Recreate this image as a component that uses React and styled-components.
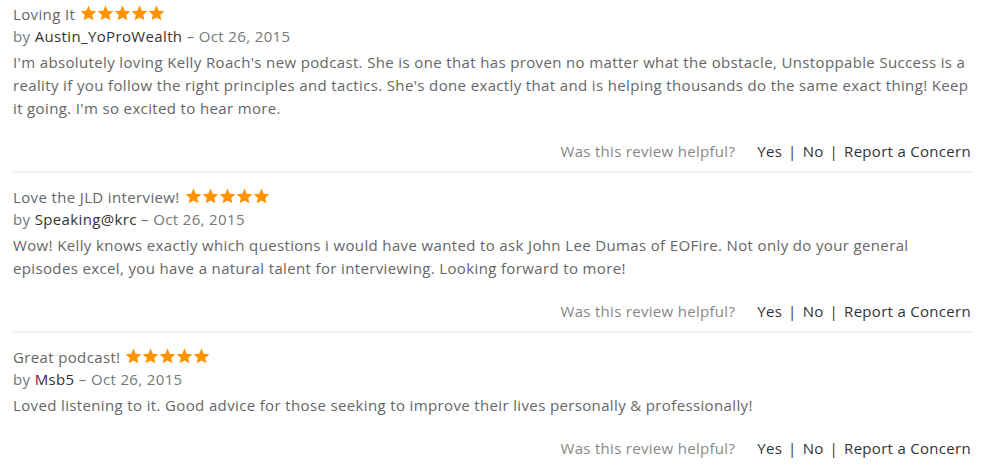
import React from "react";
import styled, { createGlobalStyle } from "styled-components";

const Global = createGlobalStyle`
  html, body { margin: 0; padding: 0; background: #fff; }
  body { font-family: "Open Sans", "Noto Sans", "Liberation Sans", sans-serif; }
`;

const List = styled.div`
  width: 959px;
  padding: 0 0 0 13px;
  box-sizing: content-box;
  font-size: 15px;
  letter-spacing: 0.36px;
  color: #666;
`;

const Review = styled.div`
  padding-top: ${(p) => (p.first ? "3px" : "13px")};
  border-bottom: ${(p) => (p.last ? "none" : "2px solid #f0f0f0")};
`;

const Title = styled.div`
  line-height: 22px;
  color: #666;
  display: flex;
  align-items: center;
  gap: 5px;
`;

const Stars = styled.span`
  display: inline-flex;
  margin-top: -2px;
`;

const Byline = styled.div`
  line-height: 22px;
  color: #777;
`;

const Author = styled.span`
  color: #333;
`;

const Body = styled.p`
  margin: 4px 0 0;
  line-height: 23px;
  color: #666;
`;

const Helpful = styled.div`
  margin-top: 20px;
  padding-bottom: 9px;
  line-height: 22px;
  display: flex;
  justify-content: flex-end;
  padding-right: 1px;
  letter-spacing: 0.3px;
`;

const Question = styled.span`
  color: #888;
  margin-right: 22px;
`;

const Action = styled.span`
  color: #333;
`;

const Sep = styled.span`
  color: #333;
  margin: 0 6px;
`;

const Star = () => (
  <svg width="17" height="16" viewBox="0 0 24 23">
    <path
      d="M12 0.8l3.3 7.3 7.9.8-5.9 5.3 1.7 7.8L12 18l-7 4 1.7-7.8L.8 8.9l7.9-.8z"
      fill="#ff9200"
    />
  </svg>
);

const reviews = [
  {
    title: "Loving It",
    author: "Austin_YoProWealth",
    date: "Oct 26, 2015",
    body:
      "I'm absolutely loving Kelly Roach's new podcast. She is one that has proven no matter what the obstacle, Unstoppable Success is a reality if you follow the right principles and tactics. She's done exactly that and is helping thousands do the same exact thing! Keep it going. I'm so excited to hear more.",
  },
  {
    title: "Love the JLD interview!",
    author: "Speaking@krc",
    date: "Oct 26, 2015",
    body:
      "Wow! Kelly knows exactly which questions i would have wanted to ask John Lee Dumas of EOFire. Not only do your general episodes excel, you have a natural talent for interviewing. Looking forward to more!",
  },
  {
    title: "Great podcast!",
    author: "Msb5",
    date: "Oct 26, 2015",
    body:
      "Loved listening to it. Good advice for those seeking to improve their lives personally & professionally!",
  },
];

export default function App() {
  return (
    <>
      <Global />
      <List>
        {reviews.map((r, i) => (
          <Review key={i} first={i === 0} last={i === reviews.length - 1}>
            <Title>
              {r.title}
              <Stars>
                {[0, 1, 2, 3, 4].map((s) => (
                  <Star key={s} />
                ))}
              </Stars>
            </Title>
            <Byline>
              by <Author>{r.author}</Author> – {r.date}
            </Byline>
            <Body>{r.body}</Body>
            <Helpful>
              <Question>Was this review helpful?</Question>
              <Action>Yes</Action>
              <Sep>|</Sep>
              <Action>No</Action>
              <Sep>|</Sep>
              <Action>Report a Concern</Action>
            </Helpful>
          </Review>
        ))}
      </List>
    </>
  );
}
